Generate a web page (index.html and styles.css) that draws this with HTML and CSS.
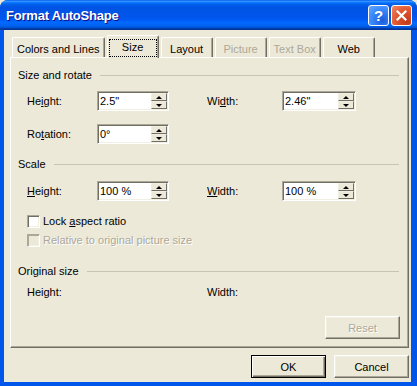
FILE: index.html
```html
<!DOCTYPE html>
<html lang="en">
<head>
    <meta charset="UTF-8">
    <title>Format AutoShape</title>
    <link rel="stylesheet" href="styles.css">
</head>
<body>
    <div class="window">
        <div class="titlebar">
            <span class="title">Format AutoShape</span>
            <div class="caption-btns">
                <span class="cap-btn help">?</span>
                <span class="cap-btn close">
                    <svg width="11" height="11" viewBox="0 0 11 11"><path d="M1.5 1.5 L9.5 9.5 M9.5 1.5 L1.5 9.5" stroke="#fff" stroke-width="2.2" stroke-linecap="square"/></svg>
                </span>
            </div>
        </div>
        <div class="client">
            <div class="tabs">
                <div class="tab">Colors and Lines</div>
                <div class="tab selected"><span class="focus">Size</span></div>
                <div class="tab">Layout</div>
                <div class="tab disabled">Picture</div>
                <div class="tab disabled">Text Box</div>
                <div class="tab">Web</div>
            </div>
            <div class="panel">
                <div class="group-head first">Size and rotate</div>
                <div class="fields">
                    <span class="label">He<u>i</u>ght:</span>
                    <div class="spin">
                        <span class="spin-value">2.5"</span>
                        <span class="spin-btns"><span class="up"></span><span class="down"></span></span>
                    </div>
                    <span class="label">Wi<u>d</u>th:</span>
                    <div class="spin wide">
                        <span class="spin-value">2.46"</span>
                        <span class="spin-btns"><span class="up"></span><span class="down"></span></span>
                    </div>
                    <span class="label">Ro<u>t</u>ation:</span>
                    <div class="spin">
                        <span class="spin-value">0°</span>
                        <span class="spin-btns"><span class="up"></span><span class="down"></span></span>
                    </div>
                </div>

                <div class="group-head scale">Scale</div>
                <div class="fields scale-fields">
                    <span class="label"><u>H</u>eight:</span>
                    <div class="spin">
                        <span class="spin-value">100 %</span>
                        <span class="spin-btns"><span class="up"></span><span class="down"></span></span>
                    </div>
                    <span class="label"><u>W</u>idth:</span>
                    <div class="spin wide">
                        <span class="spin-value">100 %</span>
                        <span class="spin-btns"><span class="up"></span><span class="down"></span></span>
                    </div>
                </div>
                <div class="check lock"><span class="box"></span><span>Lock <u>a</u>spect ratio</span></div>
                <div class="check relative disabled"><span class="box"></span><span>Relative to original picture size</span></div>

                <div class="group-head original">Original size</div>
                <div class="fields plain">
                    <span class="label">Height:</span>
                    <span></span>
                    <span class="label">Width:</span>
                    <span></span>
                </div>
                <div class="reset-row">
                    <button class="btn" disabled>Reset</button>
                </div>
            </div>
            <div class="actions">
                <button class="btn default">OK</button>
                <button class="btn">Cancel</button>
            </div>
        </div>
    </div>
</body>
</html>
```

FILE: styles.css
```css
* {
    margin: 0;
    padding: 0;
    box-sizing: border-box;
}
body, html {
    width: 100%;
    height: 100%;
    overflow: hidden;
    background: #ece9d8;
    font-family: "Liberation Sans", Arial, sans-serif;
    font-size: 11px;
    color: #000;
}
.window {
    width: 417px;
    height: 386px;
    display: flex;
    flex-direction: column;
    background: #0055ea;
    border-radius: 8px 8px 0 0;
    overflow: hidden;
}
.titlebar {
    height: 30px;
    flex: none;
    display: flex;
    align-items: center;
    justify-content: space-between;
    padding: 0 5px 0 6px;
    background: linear-gradient(180deg, #0058ee 0%, #3593ff 4%, #288eff 6%, #127dff 8%, #036ffc 10%, #0262ee 14%, #0057e5 20%, #0054e3 24%, #0055eb 56%, #005bf5 66%, #026afe 76%, #0062ef 86%, #0052d6 92%, #0040ab 94%, #003092 100%);
}
.title {
    color: #fff;
    font-weight: bold;
    font-size: 13px;
    letter-spacing: -0.2px;
    text-shadow: 1px 1px #0f1089;
}
.caption-btns {
    display: flex;
    gap: 2px;
}
.cap-btn {
    width: 21px;
    height: 21px;
    border: 1px solid #fff;
    border-radius: 3px;
    display: flex;
    align-items: center;
    justify-content: center;
    color: #fff;
}
.help {
    background: radial-gradient(circle at 70% 75%, #1b5cdb 0%, #3c8cff 60%, #6aa8ff 100%);
    font-weight: bold;
    font-size: 15px;
}
.close {
    background: radial-gradient(circle at 80% 80%, #c4391a 0%, #e2582f 55%, #f08a6b 100%);
}

.client {
    flex: 1;
    margin: 0 6px 4px 4px;
    background: #ece9d8;
    padding: 5px 2px 4px 6px;
    display: flex;
    flex-direction: column;
}

/* tabs */
.tabs {
    display: flex;
    align-items: flex-end;
    gap: 2px;
    height: 22px;
    margin-left: 2px;
    position: relative;
    z-index: 1;
}
.tab {
    height: 20px;
    min-width: 52px;
    padding: 5px 4px 0;
    line-height: 13px;
    text-align: center;
    white-space: nowrap;
    background: #ece9d8;
    border-top: 1px solid #fff;
    border-left: 1px solid #fff;
    border-right: 1px solid #716f64;
    border-radius: 2px 2px 0 0;
    box-shadow: inset -1px 0 #aca899;
}
.tab.disabled {
    color: #aca899;
}
.tab.selected {
    height: 23px;
    margin-bottom: -1px;
    padding: 3px 1px 0 1px;
}
.focus {
    display: block;
    min-width: 48px;
    padding: 1px 0 2px;
    border: 1px dotted #000;
    text-align: center;
}

/* panel */
.panel {
    height: 291px;
    border-top: 1px solid #fff;
    border-left: 1px solid #fff;
    border-right: 1px solid #716f64;
    border-bottom: 1px solid #716f64;
    box-shadow: inset -1px -1px #aca899;
}
.group-head {
    display: flex;
    align-items: center;
    gap: 8px;
    padding-left: 7px;
    margin-right: 9px;
    line-height: 13px;
}
.group-head::after {
    content: "";
    flex: 1;
    border-top: 1px solid #c7c4b4;
    margin-top: -1px;
}
.group-head.first { margin-top: 11px; }
.group-head.scale { margin-top: 14px; }
.group-head.original { margin-top: 18px; }

.fields {
    display: grid;
    grid-template-columns: 70px 110px 75px 74px;
    grid-auto-rows: 20px;
    row-gap: 13px;
    align-items: center;
    padding-left: 16px;
    margin-top: 9px;
}
.fields.scale-fields { margin-top: 10px; }
.fields.plain {
    margin-top: 8px;
    grid-auto-rows: 13px;
}
.label {
    line-height: 13px;
}

.spin {
    width: 72px;
    height: 20px;
    display: flex;
    padding: 1px;
    background: #fff;
    border: 1px solid;
    border-color: #aca899 #fff #fff #aca899;
    box-shadow: inset 1px 1px #716f64, inset -1px -1px #f1efe2;
}
.spin.wide { width: 74px; }
.spin-value {
    flex: 1;
    padding-left: 1px;
    line-height: 16px;
}
.spin-btns {
    width: 16px;
    display: flex;
    flex-direction: column;
}
.spin-btns span {
    flex: 1;
    display: flex;
    align-items: center;
    justify-content: center;
    background: #ece9d8;
    border: 1px solid;
    border-color: #f1efe2 #716f64 #716f64 #f1efe2;
}
.spin-btns span::before {
    content: "";
    border-left: 3px solid transparent;
    border-right: 3px solid transparent;
}
.spin-btns .up::before { border-bottom: 3px solid #000; }
.spin-btns .down::before { border-top: 3px solid #000; }

.check {
    display: flex;
    align-items: center;
    gap: 3px;
    padding-left: 16px;
    line-height: 13px;
}
.check.lock { margin-top: 14px; }
.check.relative { margin-top: 6px; }
.box {
    width: 13px;
    height: 13px;
    background: #fff;
    border: 1px solid;
    border-color: #aca899 #fff #fff #aca899;
    box-shadow: inset 1px 1px #716f64, inset -1px -1px #f1efe2;
}
.check.disabled {
    color: #aca899;
    text-shadow: 1px 1px #fff;
}
.check.disabled .box {
    background: #ece9d8;
    box-shadow: inset 1px 1px #aca899, inset -1px -1px #f1efe2;
}

.reset-row {
    display: flex;
    justify-content: flex-end;
    margin-top: 17px;
    padding-right: 8px;
}

.btn {
    width: 75px;
    height: 23px;
    font: inherit;
    color: #000;
    background: #ece9d8;
    border: 1px solid;
    border-color: #fff #716f64 #716f64 #fff;
    box-shadow: inset -1px -1px #aca899, inset 1px 1px #f1efe2;
}
.btn:disabled {
    color: #aca899;
    text-shadow: 1px 1px #fff;
}
.btn.default {
    border: 1px solid #000;
    box-shadow: inset 1px 1px #fff, inset -1px -1px #716f64, inset -2px -2px #aca899;
}

.actions {
    display: flex;
    justify-content: flex-end;
    gap: 8px;
    padding-top: 7px;
}
```
